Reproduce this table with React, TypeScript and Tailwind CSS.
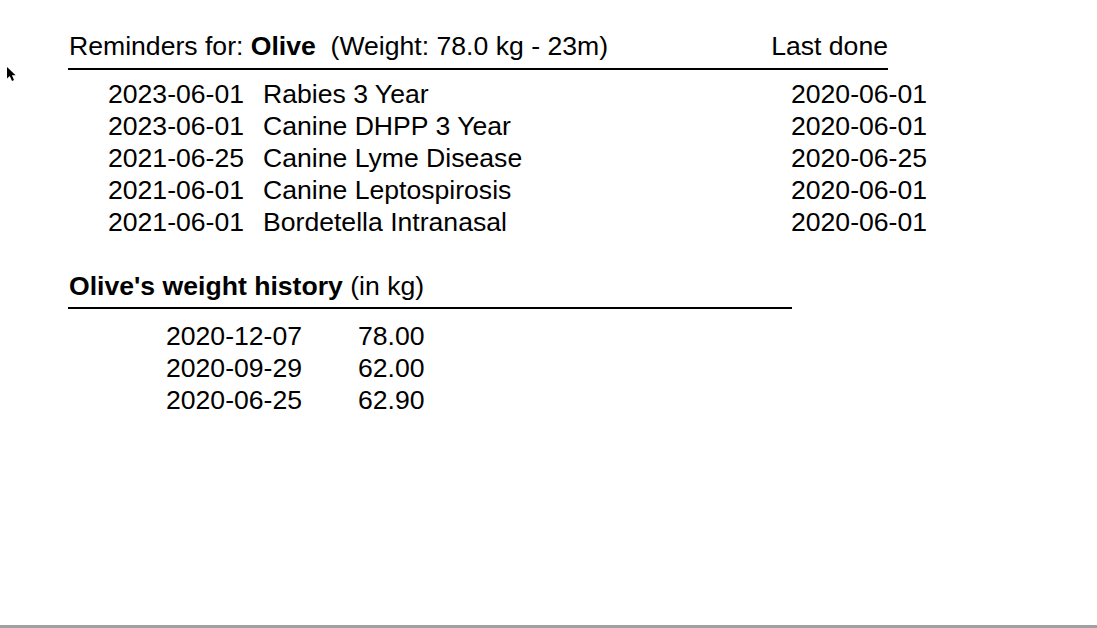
const reminders = [
  { due: "2023-06-01", name: "Rabies 3 Year", last: "2020-06-01" },
  { due: "2023-06-01", name: "Canine DHPP 3 Year", last: "2020-06-01" },
  { due: "2021-06-25", name: "Canine Lyme Disease", last: "2020-06-25" },
  { due: "2021-06-01", name: "Canine Leptospirosis", last: "2020-06-01" },
  { due: "2021-06-01", name: "Bordetella Intranasal", last: "2020-06-01" },
];

const weights = [
  { date: "2020-12-07", kg: "78.00" },
  { date: "2020-09-29", kg: "62.00" },
  { date: "2020-06-25", kg: "62.90" },
];

export default function App() {
  return (
    <div className="relative h-screen w-full flex flex-col bg-white text-black font-['Liberation_Sans',Arial,sans-serif] text-[26.6px] leading-[32px]">

      {/* Mouse pointer from the capture */}
      <svg className="absolute left-[7px] top-[67px]" width="10" height="15" viewBox="0 0 10 15">
        <path d="M0 0 L0 11.5 L2.8 9 L5 14 L7 13.1 L4.9 8.3 L8.6 8.3 Z" fill="black" />
      </svg>

      {/* Report */}
      <div className="flex-1 pt-[30px] pl-[68px]">

        {/* Reminders header */}
        <div className="w-[820px] flex justify-between border-b-2 border-black pb-[6px] pl-[1px]">
          <p>
            Reminders for: <span className="font-bold">Olive</span>&nbsp; (Weight: 78.0 kg - 23m)
          </p>
          <p>Last done</p>
        </div>

        {/* Reminder rows */}
        <div className="mt-[8px] flex flex-col">
          {reminders.map((r, i) => (
            <div key={i} className="flex pl-[40px]">
              <span className="w-[155px]">{r.due}</span>
              <span className="w-[528px]">{r.name}</span>
              <span>{r.last}</span>
            </div>
          ))}
        </div>

        {/* Weight header */}
        <div className="mt-[32px] w-[724px] border-b-2 border-black pb-[5px] pl-[1px]">
          <p>
            <span className="font-bold">Olive's weight history</span> (in kg)
          </p>
        </div>

        {/* Weight rows */}
        <div className="mt-[11px] flex flex-col">
          {weights.map((w, i) => (
            <div key={i} className="flex pl-[98px]">
              <span className="w-[192px]">{w.date}</span>
              <span>{w.kg}</span>
            </div>
          ))}
        </div>
      </div>

      {/* Bottom edge */}
      <div className="h-[3px] bg-[#a0a0a0]" />
    </div>
  );
}
